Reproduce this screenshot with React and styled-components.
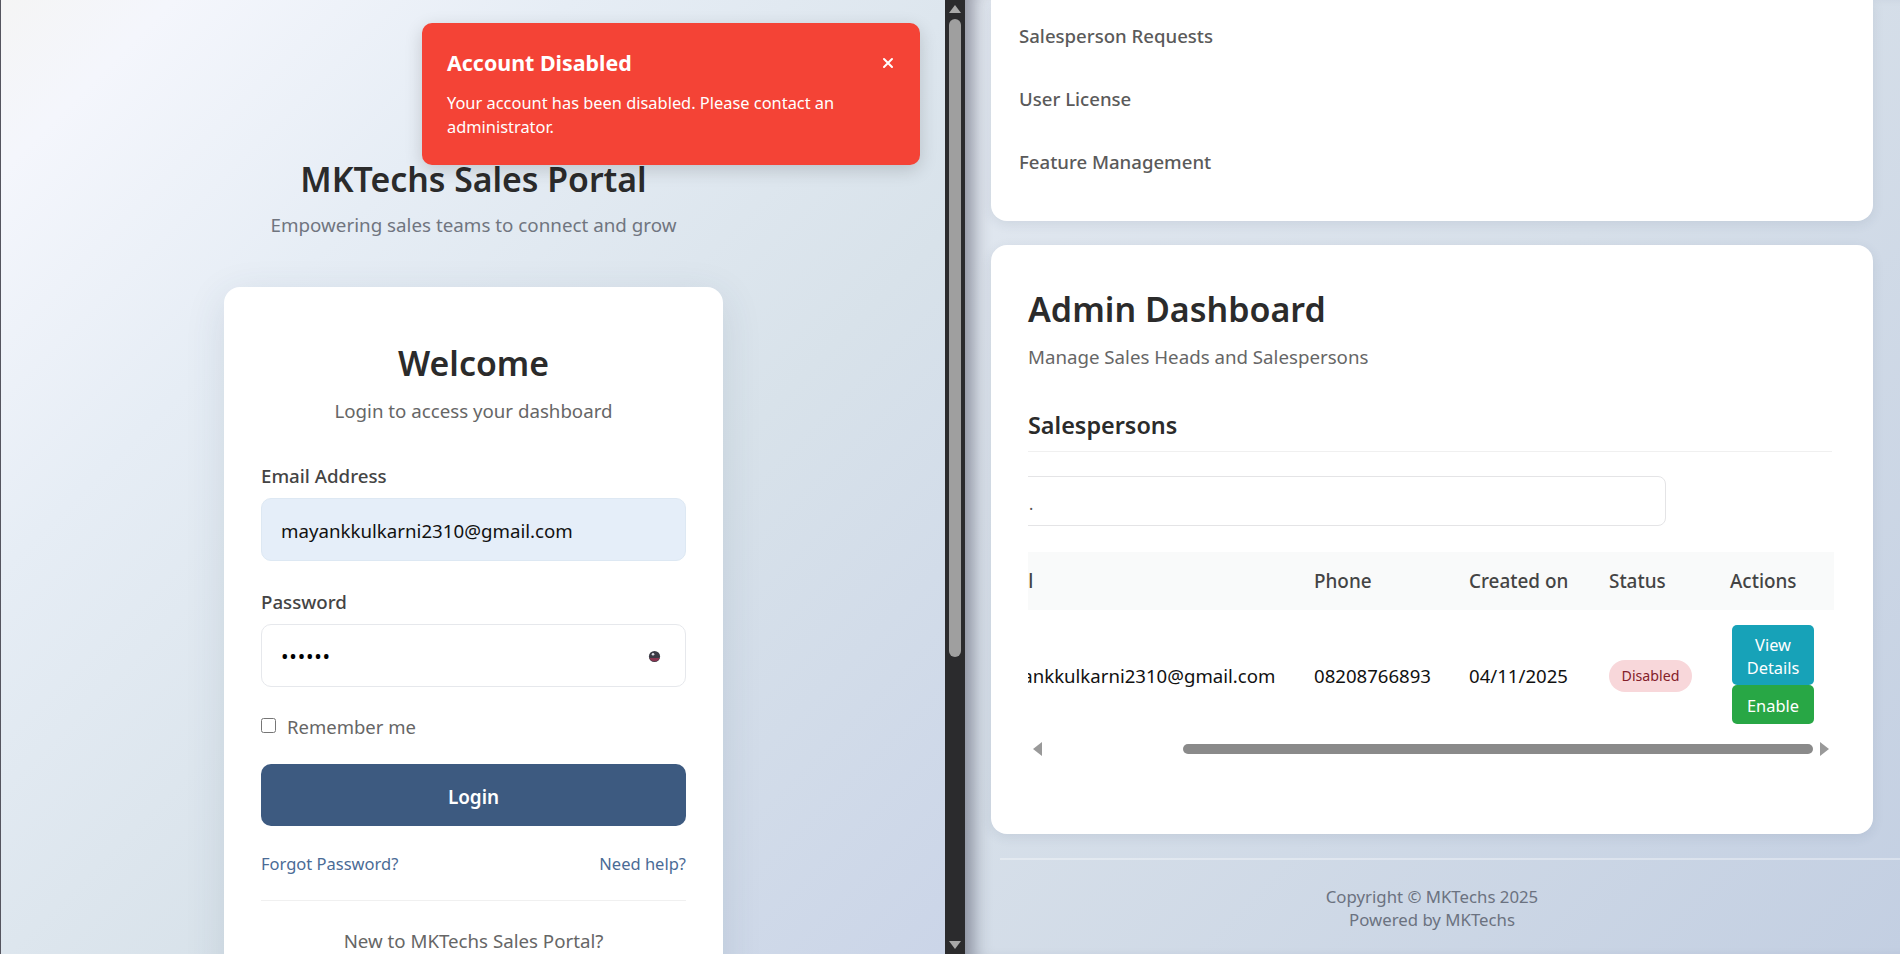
import React from 'react';
import styled, {createGlobalStyle} from 'styled-components';

const GlobalStyle = createGlobalStyle`
  html, body, #root {
    margin: 0;
    height: 100%;
    overflow: hidden;
  }
  body {
    font-family: "Noto Sans", "Open Sans", sans-serif;
    color: #333;
  }
`;

function EyeIcon() {
  return (
    <ScEye viewBox="0 0 14 14" aria-hidden="true">
      <circle cx="7" cy="7" r="6" fill="#3a3a44" />
      <path d="M1.5 8.5a6 6 0 0 0 11 0z" fill="#8a3550" />
      <circle cx="5.4" cy="4.6" r="1.4" fill="#dcdce4" />
    </ScEye>
  );
}

function CloseIcon() {
  return (
    <svg width="12" height="12" viewBox="0 0 12 12" aria-hidden="true">
      <path d="M2 2l8 8M10 2l-8 8" stroke="#fff" strokeWidth="2" strokeLinecap="round" />
    </svg>
  );
}

function Scrollbar() {
  return (
    <ScScrollbar>
      <ScArrowUp />
      <ScScrollThumb />
      <ScArrowDown />
    </ScScrollbar>
  );
}

function LoginPane() {
  return (
    <ScLoginPane>
      <ScToast>
        <ScToastHead>
          <ScToastTitle>Account Disabled</ScToastTitle>
          <ScToastClose>
            <CloseIcon />
          </ScToastClose>
        </ScToastHead>
        <ScToastText>Your account has been disabled. Please contact an administrator.</ScToastText>
      </ScToast>
      <ScBrand>MKTechs Sales Portal</ScBrand>
      <ScTagline>Empowering sales teams to connect and grow</ScTagline>
      <ScLoginCard>
        <ScWelcome>Welcome</ScWelcome>
        <ScWelcomeSub>Login to access your dashboard</ScWelcomeSub>
        <ScLabel>Email Address</ScLabel>
        <ScInputBox $autofill>mayankkulkarni2310@gmail.com</ScInputBox>
        <ScLabel>Password</ScLabel>
        <ScInputBox>
          <ScDots>••••••</ScDots>
          <EyeIcon />
        </ScInputBox>
        <ScRemember>
          <ScCheck type="checkbox" />
          Remember me
        </ScRemember>
        <ScLoginBtn>Login</ScLoginBtn>
        <ScLinks>
          <ScLink>Forgot Password?</ScLink>
          <ScLink>Need help?</ScLink>
        </ScLinks>
        <ScNewText>New to MKTechs Sales Portal?</ScNewText>
      </ScLoginCard>
    </ScLoginPane>
  );
}

function AdminPane() {
  return (
    <ScAdminPane>
      <ScMenuCard>
        <ScMenuItem>Salesperson Requests</ScMenuItem>
        <ScMenuItem>User License</ScMenuItem>
        <ScMenuItem>Feature Management</ScMenuItem>
      </ScMenuCard>
      <ScDashCard>
        <ScDashTitle>Admin Dashboard</ScDashTitle>
        <ScDashSub>Manage Sales Heads and Salespersons</ScDashSub>
        <ScSectionTitle>Salespersons</ScSectionTitle>
        <ScTableClip>
          <ScScrolled>
            <ScSearch>.</ScSearch>
            <ScHeadRow>
              <ScHeadCell>Email</ScHeadCell>
              <ScHeadCell>Phone</ScHeadCell>
              <ScHeadCell>Created on</ScHeadCell>
              <ScHeadCell>Status</ScHeadCell>
              <ScHeadCell>Actions</ScHeadCell>
            </ScHeadRow>
            <ScBodyRow>
              <ScCell>mayankkulkarni2310@gmail.com</ScCell>
              <ScCell>08208766893</ScCell>
              <ScCell>04/11/2025</ScCell>
              <ScCell>
                <ScBadge>Disabled</ScBadge>
              </ScCell>
              <ScActions>
                <ScActionBtn $color="#17a2b8" $tall>
                  View Details
                </ScActionBtn>
                <ScActionBtn $color="#28a745">Enable</ScActionBtn>
              </ScActions>
            </ScBodyRow>
          </ScScrolled>
        </ScTableClip>
        <ScHScroll>
          <ScArrowLeft />
          <ScHTrack>
            <ScHThumb />
          </ScHTrack>
          <ScArrowRight />
        </ScHScroll>
      </ScDashCard>
      <ScFooter>
        Copyright © MKTechs 2025
        <br />
        Powered by MKTechs
      </ScFooter>
    </ScAdminPane>
  );
}

export default function App() {
  return (
    <ScPage>
      <GlobalStyle />
      <LoginPane />
      <Scrollbar />
      <AdminPane />
    </ScPage>
  );
}

const ScPage = styled.div`
  display: flex;
  width: 1900px;
  height: 954px;
  overflow: hidden;
`;

const ScLoginPane = styled.section`
  position: relative;
  box-sizing: border-box;
  flex: 0 0 945px;
  height: 954px;
  padding: 155px 0 0 1px;
  border-left: 1px solid #55555f;
  display: flex;
  flex-direction: column;
  align-items: center;
  overflow: hidden;
  background: linear-gradient(135deg, #f5f5f5 0%, #f4f6fc 9%, #e6edf5 30%, #d8e2ea 62%, #cbd5e8 100%);
`;

const ScToast = styled.div`
  position: absolute;
  top: 23px;
  left: 421px;
  box-sizing: border-box;
  width: 498px;
  height: 142px;
  padding: 25px 25px 0;
  border-radius: 10px;
  background: #f44336;
  color: #fff;
  box-shadow: 0 5px 18px rgba(0, 0, 0, 0.16);
`;

const ScToastHead = styled.div`
  display: flex;
  align-items: center;
  justify-content: space-between;
`;

const ScToastTitle = styled.div`
  font-size: 21.4px;
  font-weight: 700;
  line-height: 30px;
`;

const ScToastClose = styled.span`
  display: flex;
  margin-right: 1px;
`;

const ScToastText = styled.p`
  margin: 13px 0 0;
  font-size: 16.4px;
  line-height: 24px;
  width: 410px;
`;

const ScBrand = styled.h1`
  margin: 0;
  font-size: 33.8px;
  font-weight: 600;
  line-height: 48px;
  color: #2b2b2b;
`;

const ScTagline = styled.p`
  margin: 9px 0 0;
  font-size: 18.8px;
  line-height: 27px;
  color: #70757f;
`;

const ScLoginCard = styled.div`
  box-sizing: border-box;
  width: 499px;
  margin-top: 48px;
  padding: 52px 37px 40px;
  border-radius: 16px;
  background: #fff;
  box-shadow: 0 10px 40px rgba(50, 70, 100, 0.12);
`;

const ScWelcome = styled.h2`
  margin: 0;
  text-align: center;
  font-size: 33.8px;
  font-weight: 600;
  line-height: 48px;
  color: #2b2b2b;
`;

const ScWelcomeSub = styled.p`
  margin: 10px 0 0;
  text-align: center;
  font-size: 18.7px;
  line-height: 28px;
  color: #666;
`;

const ScLabel = styled.div`
  margin: 37px 0 8px;
  font-size: 18.7px;
  font-weight: 500;
  line-height: 28px;
  color: #444;

  & + div + & {
    margin-top: 27px;
  }
`;

const ScInputBox = styled.div`
  box-sizing: border-box;
  display: flex;
  align-items: center;
  justify-content: space-between;
  height: 63px;
  padding: 2px 24px 0 19px;
  border: 1px solid ${({$autofill}) => ($autofill ? '#dde8f3' : '#e6e8ec')};
  border-radius: 10px;
  font-size: 18.7px;
  color: #111;
  background: ${({$autofill}) => ($autofill ? '#e5eef9' : '#fff')};
`;

const ScDots = styled.span`
  font-size: 20px;
  letter-spacing: 0.8px;
  color: #000;
`;

const ScEye = styled.svg`
  width: 13px;
  height: 13px;
`;

const ScRemember = styled.label`
  display: flex;
  align-items: center;
  gap: 11px;
  margin-top: 26px;
  font-size: 18.5px;
  line-height: 28px;
  color: #666;
`;

const ScCheck = styled.input`
  width: 15px;
  height: 15px;
  margin: -3px 0 0;
`;

const ScLoginBtn = styled.div`
  box-sizing: border-box;
  display: flex;
  align-items: center;
  justify-content: center;
  height: 62px;
  margin-top: 23px;
  padding-top: 3px;
  border-radius: 10px;
  background: #3d5a80;
  color: #fff;
  font-size: 18.9px;
  font-weight: 600;
`;

const ScLinks = styled.div`
  display: flex;
  justify-content: space-between;
  margin-top: 25px;
  padding-bottom: 23px;
  border-bottom: 1px solid #f0f0f0;
`;

const ScLink = styled.span`
  font-size: 16.5px;
  line-height: 26px;
  color: #4a6b96;
`;

const ScNewText = styled.p`
  margin: 26px 0 0;
  text-align: center;
  font-size: 18.7px;
  line-height: 28px;
  color: #666;
`;

const ScScrollbar = styled.div`
  flex: 0 0 20px;
  height: 954px;
  display: flex;
  flex-direction: column;
  align-items: center;
  background: #2b2b2d;
`;

const ScArrowUp = styled.span`
  width: 0;
  height: 0;
  margin-top: 5px;
  border-left: 6px solid transparent;
  border-right: 6px solid transparent;
  border-bottom: 8px solid #a8a8a8;
`;

const ScArrowDown = styled.span`
  width: 0;
  height: 0;
  margin-top: auto;
  margin-bottom: 5px;
  border-left: 6px solid transparent;
  border-right: 6px solid transparent;
  border-top: 8px solid #a8a8a8;
`;

const ScScrollThumb = styled.span`
  width: 12px;
  height: 638px;
  margin-top: 6px;
  border-radius: 6px;
  background: #9f9f9f;
`;

const ScAdminPane = styled.section`
  box-sizing: border-box;
  flex: 1;
  height: 954px;
  padding-left: 26px;
  overflow: hidden;
  background: linear-gradient(135deg, #e3e9f1 0%, #d6dfe9 45%, #c3cfe2 100%);
  box-shadow: inset 22px 0 18px -14px rgba(40, 40, 60, 0.45);
`;

const ScMenuCard = styled.div`
  box-sizing: border-box;
  width: 882px;
  height: 221px;
  padding-top: 15px;
  padding-left: 28px;
  border-radius: 0 0 16px 16px;
  background: #fff;
  box-shadow: 0 3px 12px rgba(50, 70, 100, 0.1);
`;

const ScMenuItem = styled.div`
  height: 63px;
  font-size: 18.6px;
  font-weight: 500;
  line-height: 42px;
  color: #5a5a5a;
`;

const ScDashCard = styled.div`
  box-sizing: border-box;
  width: 882px;
  height: 589px;
  margin-top: 24px;
  padding: 39px 37px 0;
  border-radius: 16px;
  background: #fff;
  box-shadow: 0 3px 12px rgba(50, 70, 100, 0.1);
`;

const ScDashTitle = styled.h2`
  margin: 0;
  font-size: 34px;
  font-weight: 600;
  line-height: 50px;
  color: #2b2b2b;
`;

const ScDashSub = styled.p`
  margin: 9px 0 0;
  font-size: 18.7px;
  line-height: 27px;
  color: #666;
`;

const ScSectionTitle = styled.h3`
  margin: 38px 0 0;
  padding-bottom: 9px;
  border-bottom: 1px solid #f0f0f0;
  width: 804px;
  font-size: 23.4px;
  font-weight: 600;
  line-height: 34px;
  color: #2b2b2b;
`;

const ScTableClip = styled.div`
  width: 806px;
  margin-top: 24px;
  overflow: hidden;
`;

const ScScrolled = styled.div`
  margin-left: -153px;
  width: 960px;
`;

const ScSearch = styled.div`
  box-sizing: border-box;
  width: 791px;
  height: 50px;
  padding: 16px 0 0 153px;
  border: 1px solid #e4e4e6;
  border-radius: 8px;
  font-size: 16px;
  color: #555;
`;

const ScHeadRow = styled.div`
  display: grid;
  grid-template-columns: 439px 155px 140px 121px 105px;
  align-items: center;
  height: 58px;
  margin-top: 26px;
  background: #f9fafa;
`;

const ScBodyRow = styled.div`
  display: grid;
  grid-template-columns: 439px 155px 140px 121px 105px;
  align-items: center;
  height: 129px;
`;

const ScHeadCell = styled.div`
  font-size: 18.9px;
  font-weight: 500;
  color: #444;

  &:first-child {
    padding-left: 109px;
  }
`;

const ScCell = styled.div`
  padding-top: 2px;
  font-size: 18.6px;
  color: #111;

  &:first-child {
    padding-left: 110px;
  }
`;

const ScBadge = styled.span`
  display: inline-flex;
  align-items: center;
  justify-content: center;
  width: 83px;
  height: 32px;
  border-radius: 16px;
  background: #f8d7da;
  color: #842029;
  font-size: 14.2px;
`;

const ScActions = styled.div`
  display: flex;
  flex-direction: column;
  padding-left: 2px;
`;

const ScActionBtn = styled.div`
  box-sizing: border-box;
  display: flex;
  align-items: center;
  justify-content: center;
  width: 82px;
  height: ${({$tall}) => ($tall ? '60px' : '39px')};
  padding-top: 2px;
  border-radius: 5px;
  background: ${({$color}) => $color};
  color: #fff;
  font-size: 16.4px;
  line-height: 23px;
  text-align: center;
`;

const ScHScroll = styled.div`
  display: flex;
  align-items: center;
  width: 806px;
  height: 20px;
`;

const ScArrowLeft = styled.span`
  width: 0;
  height: 0;
  margin-left: 5px;
  border-top: 7px solid transparent;
  border-bottom: 7px solid transparent;
  border-right: 9px solid #999;
`;

const ScArrowRight = styled.span`
  width: 0;
  height: 0;
  margin-right: 5px;
  border-top: 7px solid transparent;
  border-bottom: 7px solid transparent;
  border-left: 9px solid #999;
`;

const ScHTrack = styled.div`
  flex: 1;
  display: flex;
  justify-content: flex-end;
  padding-right: 7px;
`;

const ScHThumb = styled.span`
  width: 630px;
  height: 10px;
  border-radius: 5px;
  background: #8a8a8a;
`;

const ScFooter = styled.footer`
  margin: 24px 0 0 9px;
  padding: 25px 36px 0 0;
  border-top: 2px solid rgba(255, 255, 255, 0.35);
  text-align: center;
  font-size: 16.8px;
  line-height: 23px;
  color: #6b7280;
`;
